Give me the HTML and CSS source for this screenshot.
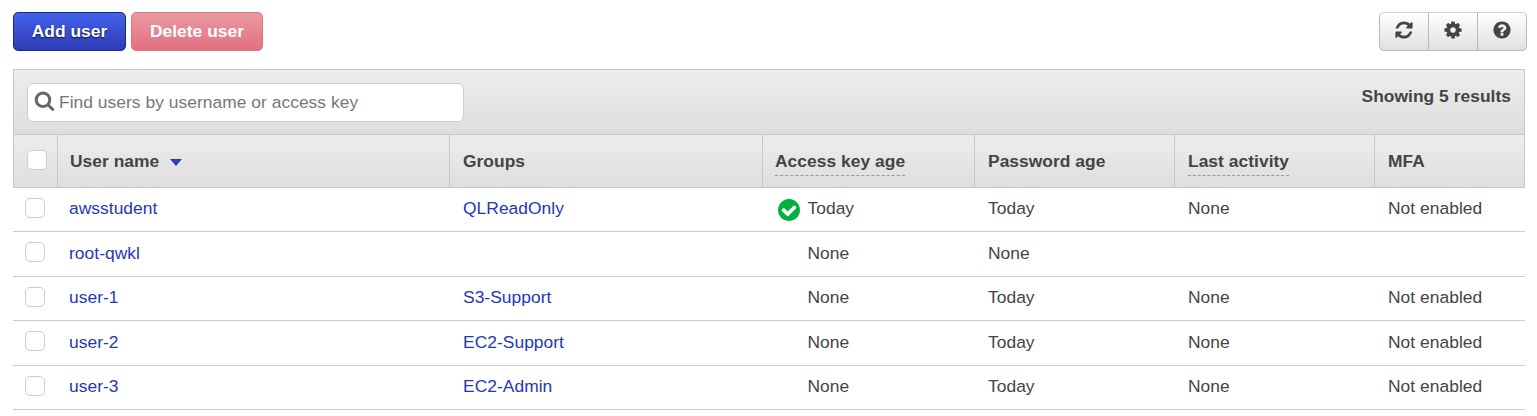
FILE: index.html
```html
<!DOCTYPE html>
<html lang="en">
<head>
<meta charset="utf-8">
<title>Users</title>
<link rel="stylesheet" href="styles.css">
</head>
<body>
<div class="toolbar">
  <div class="actions">
    <button class="btn primary">Add user</button>
    <button class="btn danger">Delete user</button>
  </div>
  <div class="group">
    <button class="tool" aria-label="Refresh"><svg class="icon" viewBox="0 0 1792 1792"><path d="M1639 1056q0 5-1 7-64 268-268 434.5t-478 166.5q-146 0-282.5-55t-243.5-157l-129 129q-19 19-45 19t-45-19-19-45v-448q0-26 19-45t45-19h448q26 0 45 19t19 45-19 45l-137 137q71 66 161 102t187 36q134 0 250-65t186-179q11-17 53-117 8-23 30-23h192q13 0 22.5 9.5t9.500 22.500zm25-800v448q0 26-19 45t-45 19h-448q-26 0-45-19t-19-45 19-45l138-138q-148-137-349-137-134 0-250 65t-186 179q-11 17-53 117-8 23-30 23h-199q-13 0-22.500-9.500t-9.500-22.500v-7q65-268 270-434.500t480-166.500q146 0 284 55.500t245 156.500l130-129q19-19 45-19t45 19 19 45z"/></svg></button>
    <button class="tool" aria-label="Settings"><svg class="icon" viewBox="0 0 1792 1792"><path d="M1152 896q0-106-75-181t-181-75-181 75-75 181 75 181 181 75 181-75 75-181zm512-109v222q0 12-8 23t-20 13l-185 28q-19 54-39 91 35 50 107 138 10 12 10 25t-9 23q-27 37-99 108t-94 71q-12 0-26-9l-138-108q-44 23-91 38-16 136-29 186-7 28-36 28h-222q-14 0-24.500-8.500t-11.500-21.500l-28-184q-49-16-90-37l-141 107q-10 9-25 9-14 0-25-11-126-114-165-168-7-10-7-23 0-12 8-23 15-21 51-66.500t54-70.500q-27-50-41-99l-183-27q-13-2-21-12.500t-8-23.500v-222q0-12 8-23t19-13l186-28q14-46 39-92-40-57-107-138-10-12-10-24 0-10 9-23 26-36 98.500-107.500t94.500-71.500q13 0 26 10l138 107q44-23 91-38 16-136 29-186 7-28 36-28h222q14 0 24.500 8.500t11.500 21.500l28 184q49 16 90 37l142-107q9-9 24-9 13 0 25 10 129 119 165 170 7 8 7 22 0 12-8 23-15 21-51 66.500t-54 70.500q26 50 41 98l183 28q13 2 21 12.500t8 23.500z"/></svg></button>
    <button class="tool" aria-label="Help"><svg class="icon" viewBox="0 0 1792 1792"><path d="M1024 1376v-192q0-14-9-23t-23-9h-192q-14 0-23 9t-9 23v192q0 14 9 23t23 9h192q14 0 23-9t9-23zm256-672q0-88-55.500-163t-138.500-116-170-41q-243 0-371 213-15 24 8 42l132 100q7 6 19 6 16 0 25-12 53-68 86-92 34-24 86-24 48 0 85.500 26t37.500 59q0 38-20 61t-68 45q-63 28-115.500 86.500t-52.500 125.500v36q0 14 9 23t23 9h192q14 0 23-9t9-23q0-19 21.500-49.500t54.500-49.500q32-18 49-28.500t46-35 44.500-48 28-60.500 12.500-81zm384 192q0 209-103 385.500t-279.500 279.500-385.500 103-385.500-103-279.500-279.500-103-385.500 103-385.500 279.500-279.500 385.500-103 385.500 103 279.500 279.500 103 385.500z"/></svg></button>
  </div>
</div>
<div class="panel">
  <div class="filter">
    <label class="search"><svg class="icon" viewBox="0 0 1792 1792"><path d="M1216 832q0-185-131.500-316.500t-316.500-131.500-316.500 131.500-131.500 316.500 131.500 316.500 316.500 131.500 316.500-131.500 131.500-316.500zm512 832q0 52-38 90t-90 38q-54 0-90-38l-343-342q-179 124-399 124-143 0-273.500-55.500t-225-150-150-225-55.500-273.500 55.500-273.500 150-225 225-150 273.500-55.500 273.500 55.500 225 150 150 225 55.500 273.500q0 220-124 399l343 343q37 37 37 90z"/></svg><input class="query" type="text" placeholder="Find users by username or access key"></label>
    <div class="count">Showing 5 results</div>
  </div>
  <div class="row head">
    <div class="cell"><span class="check"></span></div>
    <div class="cell">User name<svg class="sort" viewBox="0 0 12 7"><path d="M0 0h12L6 7z"/></svg></div>
    <div class="cell">Groups</div>
    <div class="cell key"><span class="hint">Access key age</span></div>
    <div class="cell">Password age</div>
    <div class="cell"><span class="hint">Last activity</span></div>
    <div class="cell">MFA</div>
  </div>
</div>
<div class="rows">
  <div class="row item">
    <div class="cell"><span class="check"></span></div>
    <div class="cell link">awsstudent</div><div class="cell link">QLReadOnly</div>
    <div class="cell key"><span class="status"><svg class="ok" viewBox="0 0 1536 1536"><path d="M1284 606q0-28-18-46l-91-90q-19-19-45-19t-45 19l-408 407-226-226q-19-19-45-19t-45 19l-91 90q-18 18-18 46 0 27 18 45l362 362q19 19 45 19 27 0 46-19l543-543q18-18 18-45zm252 162q0 209-103 385.500t-279.500 279.500-385.500 103-385.500-103-279.500-279.500-103-385.500 103-385.500 279.500-279.500 385.500-103 385.500 103 279.500 279.500 103 385.500z"/></svg></span>Today</div>
    <div class="cell">Today</div><div class="cell">None</div><div class="cell">Not enabled</div>
  </div>
  <div class="row item tall">
    <div class="cell"><span class="check"></span></div>
    <div class="cell link">root-qwkl</div><div class="cell"></div>
    <div class="cell key"><span class="status"></span>None</div>
    <div class="cell">None</div><div class="cell"></div><div class="cell"></div>
  </div>
  <div class="row item">
    <div class="cell"><span class="check"></span></div>
    <div class="cell link">user-1</div><div class="cell link">S3-Support</div>
    <div class="cell key"><span class="status"></span>None</div>
    <div class="cell">Today</div><div class="cell">None</div><div class="cell">Not enabled</div>
  </div>
  <div class="row item tall">
    <div class="cell"><span class="check"></span></div>
    <div class="cell link">user-2</div><div class="cell link">EC2-Support</div>
    <div class="cell key"><span class="status"></span>None</div>
    <div class="cell">Today</div><div class="cell">None</div><div class="cell">Not enabled</div>
  </div>
  <div class="row item">
    <div class="cell"><span class="check"></span></div>
    <div class="cell link">user-3</div><div class="cell link">EC2-Admin</div>
    <div class="cell key"><span class="status"></span>None</div>
    <div class="cell">Today</div><div class="cell">None</div><div class="cell">Not enabled</div>
  </div>
</div>
</body>
</html>
```
FILE: styles.css
```css
* { box-sizing: border-box; }
body {
  margin: 0;
  padding: 12px 12px 0 13px;
  background: #fff;
  color: #444;
  font: 17.4px/20px "Liberation Sans", Arial, sans-serif;
  letter-spacing: 0.04px;
}
.toolbar {
  display: flex;
  justify-content: space-between;
  height: 39px;
  margin: 0 -2px 18px 0;
}
.actions { display: flex; gap: 5px; }
.btn {
  padding: 0 0 1px;
  border: 1px solid;
  border-radius: 5px;
  color: #fff;
  font: bold 17.4px/20px "Liberation Sans", Arial, sans-serif;
  letter-spacing: 0.04px;
}
.primary {
  width: 113px;
  border-color: #172a80;
  background: linear-gradient(#4262ed, #2f3bb5);
  text-shadow: 0 1px 2px #000b;
}
.danger {
  width: 132px;
  border-color: #e07484;
  background: linear-gradient(#e99ba3, #e26f7f);
}
.group {
  display: flex;
  border: 1px solid #b8b8b8;
  border-top-color: #d0d0d0;
  border-radius: 5px;
  background: linear-gradient(#fff, #e0e0e0);
}
.tool {
  display: flex;
  justify-content: center;
  width: 49px;
  padding: 7px 0 0;
  border: 0;
  border-right: 1px solid #b8b8b8;
  background: none;
}
.tool:last-child { width: 48px; padding-right: 1px; border-right: 0; }
.icon { width: 20px; height: 20px; fill: #444; flex: none; }
.panel {
  border: 1px solid #c8c8c8;
  background: #e5e5e5;
}
.filter {
  display: flex;
  justify-content: space-between;
  height: 65px;
  padding: 13px;
  border-bottom: 1px solid #c8c8c8;
  background: linear-gradient(#ededed, #dedede);
}
.search {
  display: flex;
  gap: 5px;
  width: 437px;
  height: 39px;
  padding: 6px;
  border: 1px solid #ccc;
  border-radius: 6px;
  background: #fff;
}
.search .icon { width: 21px; height: 21px; margin-right: -1px; fill: #666; }
.query {
  flex: 1;
  height: 22px;
  margin-top: 1px;
  padding: 0;
  border: 0;
  outline: 0;
  font: inherit;
  letter-spacing: inherit;
}
.query::placeholder { color: #777; }
.count { padding-top: 3px; font-weight: bold; }
.row {
  display: grid;
  grid-template-columns: 44px 392px 313px 212px 200px 200px 1fr;
}
.head {
  height: 52px;
  background: linear-gradient(#ededed, #dedede);
  font-weight: bold;
}
.head .cell {
  padding: 16px 0 0 13px;
  border-right: 1px solid #c8c8c8;
}
.head .cell:nth-child(2) { padding-left: 12px; }
.head .key { padding-left: 12px; }
.head .cell:last-child { border-right: 0; }
.head .cell:first-child { padding-top: 15px; }
.check {
  display: block;
  width: 20px;
  height: 20px;
  border: 1px solid #ccc;
  border-radius: 5px;
  background: #fff;
}
.sort { width: 12px; height: 7px; margin: 0 0 1px 11px; fill: #2a3cc0; }
.hint {
  display: inline-block;
  height: 25px;
  border-bottom: 1px dashed #999;
}
.item {
  height: 44px;
  border-bottom: 1px solid #ccc;
}
.tall { height: 45px; }
.item .cell { padding: 10px 0 0 14px; }
.tall .cell { padding-top: 11px; }
.item .cell:first-child { padding: 10px 0 0 12px; }
.item .cell:nth-child(2) { padding-left: 12px; }
.link { color: #2538b5; }
.item .key { display: flex; }
.status { width: 30px; height: 20px; margin-right: 1.5px; padding: 1px 0 0 2px; }
.ok { display: block; width: 22px; height: 22px; fill: #00b140; }
```
